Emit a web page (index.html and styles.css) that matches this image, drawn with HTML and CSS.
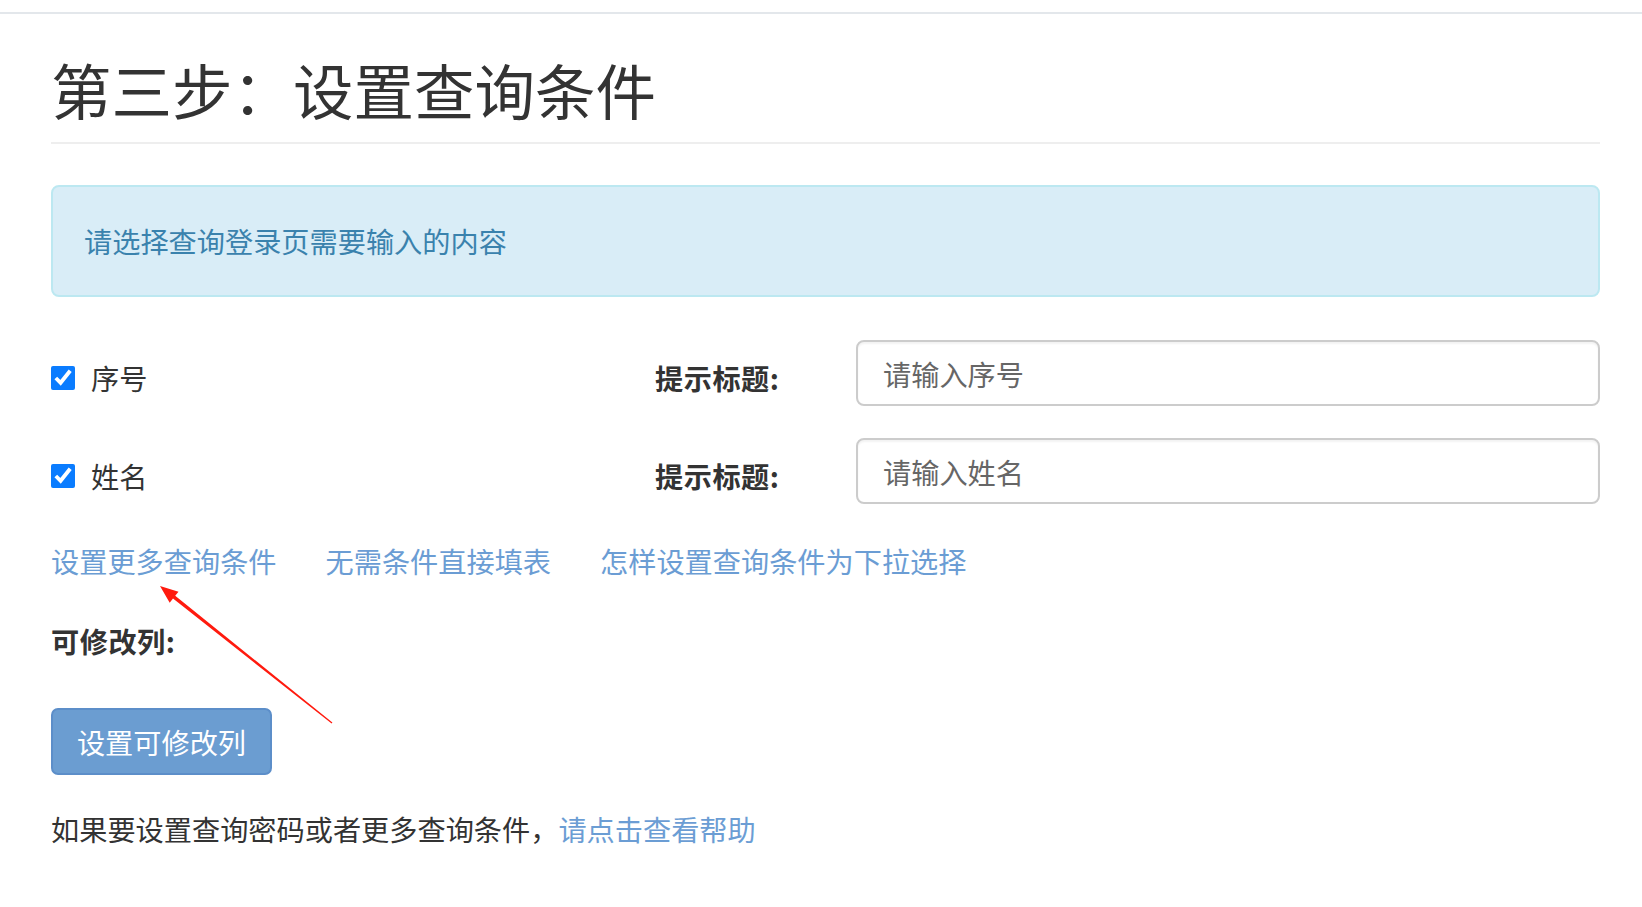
FILE: index.html
```html
<!DOCTYPE html>
<html lang="zh-CN">
<head>
  <meta charset="utf-8">
  <title>设置查询条件</title>
  <link rel="stylesheet" href="styles.css">
</head>
<body>
  <div class="top-bar"></div>

  <div class="container">
    <h1 class="page-title">第三步：设置查询条件</h1>

    <div class="alert-info">请选择查询登录页需要输入的内容</div>

    <div class="field-row">
      <label class="check-label">
        <input type="checkbox" class="check" checked>
        <span>序号</span>
      </label>
      <div class="hint-label">提示标题:</div>
      <input type="text" class="form-control" placeholder="请输入序号">
    </div>

    <div class="field-row">
      <label class="check-label">
        <input type="checkbox" class="check" checked>
        <span>姓名</span>
      </label>
      <div class="hint-label">提示标题:</div>
      <input type="text" class="form-control" placeholder="请输入姓名">
    </div>

    <div class="link-row">
      <a href="#" class="link">设置更多查询条件</a>
      <a href="#" class="link">无需条件直接填表</a>
      <a href="#" class="link">怎样设置查询条件为下拉选择</a>
    </div>

    <div class="section-label">可修改列:</div>

    <button class="btn-primary">设置可修改列</button>

    <p class="help-text">如果要设置查询密码或者更多查询条件，<a href="#" class="link">请点击查看帮助</a></p>
  </div>

  <!-- 标注箭头 -->
  <svg class="annotation" width="1642" height="907" viewBox="0 0 1642 907">
    <polygon fill="#ff1a0e" points="160,586 178.5,591.7 175.2,595.8 332.4,722.5 331.6,723.5 173,598.6 169.7,602.7"/>
  </svg>
</body>
</html>
```

FILE: styles.css
```css
body {
  margin: 0;
  font-family: "Noto Sans CJK SC", "Liberation Sans", sans-serif;
  color: #333;
  background: #fff;
  font-size: 28.2px;
  line-height: 40px;
}
.top-bar {
  height: 12px;
  border-bottom: 2px solid #e3e7eb;
}
.container {
  margin-left: 51px;
  width: 1549px;
}
.page-title {
  margin: 40px 0 0;
  padding-bottom: 18px;
  border-bottom: 2px solid #eee;
  font-size: 60.5px;
  line-height: 70px;
  font-weight: normal;
  color: #333;
}
.alert-info {
  margin-top: 41px;
  height: 112px;
  box-sizing: border-box;
  padding: 34px 31px;
  background-color: #d9edf7;
  border: 2px solid #bce8f1;
  border-radius: 8px;
  color: #3a82ad;
}
.field-row {
  display: grid;
  grid-template-columns: 604px 201px 1fr;
  align-items: start;
  height: 66px;
  margin-top: 32px;
}
.alert-info + .field-row {
  margin-top: 43px;
}
.check-label {
  display: flex;
  align-items: flex-start;
  padding-top: 18px;
}
.check {
  width: 24px;
  height: 24px;
  margin: 8px 16px 0 0;
  accent-color: #0a7cff;
}
.hint-label {
  padding-top: 18px;
  font-weight: bold;
  letter-spacing: 0.5px;
}
.form-control {
  height: 66px;
  box-sizing: border-box;
  padding: 0 25px;
  border: 2px solid #ccc;
  border-radius: 8px;
  box-shadow: inset 0 2px 2px rgba(0,0,0,0.05);
  font-family: inherit;
  font-size: 28.2px;
  color: #555;
}
.form-control::placeholder {
  color: #666;
}
.link-row {
  display: flex;
  gap: 49px;
  margin-top: 37px;
}
.link {
  color: #6b9dd4;
  text-decoration: none;
}
.section-label {
  margin-top: 40px;
  font-weight: bold;
  letter-spacing: 0.5px;
}
.btn-primary {
  display: block;
  margin-top: 47px;
  width: 221px;
  height: 67px;
  padding: 0;
  background-color: #6b9dd1;
  border: 2px solid #5c8ec9;
  border-radius: 7px;
  color: #fff;
  font-family: inherit;
  font-size: 28.2px;
}
.help-text {
  margin: 34px 0 0;
}
.annotation {
  position: absolute;
  top: 0;
  left: 0;
  pointer-events: none;
}
```
